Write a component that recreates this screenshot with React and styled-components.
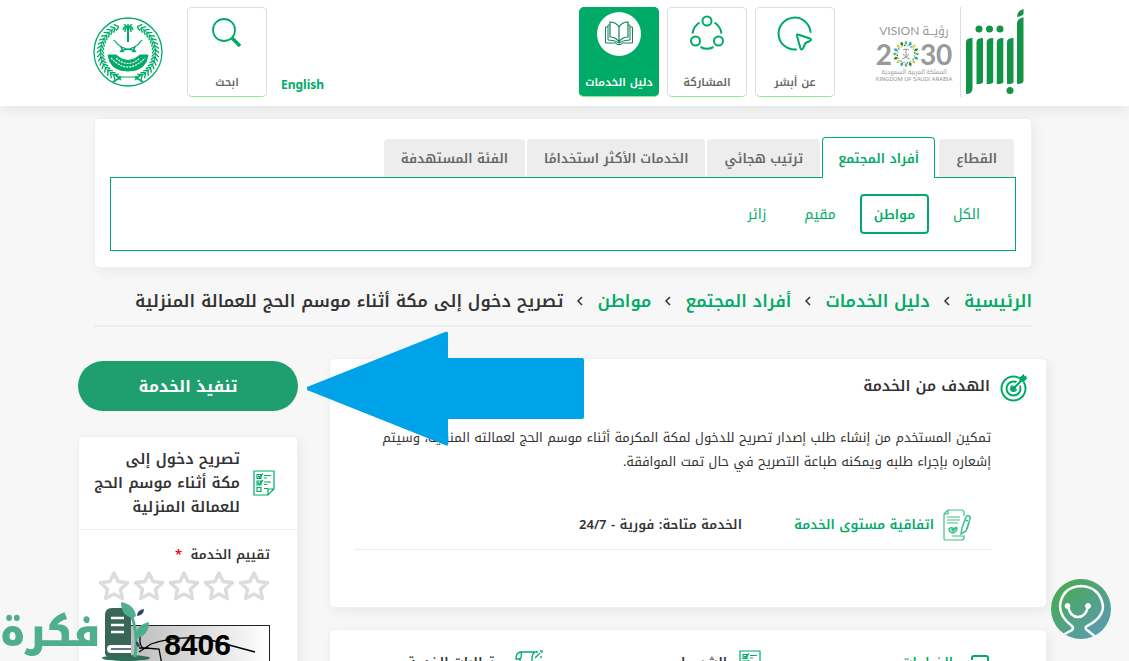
import React from "react";
import styled, { createGlobalStyle, css } from "styled-components";

const GREEN = "#00ab67";
const LINE = "#ececec";

const GlobalStyle = createGlobalStyle`
    * {
        box-sizing: border-box;
    }

    body {
        margin: 0;
        background: #f7f7f7;
        color: #333;
        font-family: "Noto Kufi Arabic", "DejaVu Sans", sans-serif;
        font-size: 13px;
        line-height: 24px;
    }

    button {
        font-family: inherit;
        cursor: pointer;
    }

    a {
        color: inherit;
        text-decoration: none;
    }

    h1, h2, h3, p {
        margin: 0;
    }

    svg {
        display: block;
        flex-shrink: 0;
    }
`;

const Page = styled.div`
    height: 100vh;
    overflow-x: hidden;
    overflow-y: auto;
    scrollbar-width: none;
`;

/* header */

const Header = styled.header`
    display: flex;
    align-items: center;
    height: 106px;
    padding: 0 104px 2px 93px;
    background: white;
    box-shadow: 0 4px 14px rgba(0, 0, 0, 0.08);
`;

const Divider = styled.div`
    width: 1px;
    height: 90px;
    margin: 0 4px 0 6px;
    background: #ddd;
`;

const Vision = styled.div`
    display: flex;
    flex-direction: column;
    align-items: center;
    width: 80px;
    margin-left: 39px;
    color: #97999b;
    direction: ltr;
    white-space: nowrap;
`;

const VisionTop = styled.div`
    display: flex;
    gap: 3px;
    font-family: Lato, "Noto Kufi Arabic", sans-serif;
    font-size: 12px;
    line-height: 18px;
`;

const VisionYear = styled.div`
    display: flex;
    align-items: center;
    font-family: Lato, sans-serif;
    font-size: 28px;
    font-weight: 700;
    line-height: 24px;
`;

const VisionSmall = styled.div`
    font-family: Roboto, "Noto Kufi Arabic", sans-serif;
    font-size: 6px;
    line-height: 7px;
`;

const HeaderNav = styled.nav`
    display: flex;
    gap: 8px;
    margin-left: auto;
`;

const HeaderButton = styled.button`
    display: flex;
    flex-direction: column;
    align-items: center;
    justify-content: space-between;
    width: 80px;
    height: 90px;
    padding: 4px 0 2px;
    background: ${(p) => (p.$active ? GREEN : "white")};
    color: ${(p) => (p.$active ? "white" : "#666")};
    border: 1px solid ${(p) => (p.$active ? GREEN : "#ddd")};
    border-bottom-color: #90ee90;
    border-radius: 5px;
    font-size: 11px;
    font-weight: 600;
    line-height: 22px;
    white-space: nowrap;
`;

const Language = styled.a`
    align-self: flex-end;
    margin: 0 0 7px 14px;
    color: ${GREEN};
    font-family: "Noto Sans", sans-serif;
    font-size: 12px;
    font-weight: 700;
`;

const EmblemLink = styled.a`
    margin-right: 24px;
`;

/* body */

const Body = styled.main`
    padding: 12px 82px 0 78px;
`;

const Inset = styled.div`
    margin: 0 15px 0 16px;
`;

const Card = styled.section`
    background: white;
    border: 1px solid #f0f0f0;
    border-radius: 5px;
    box-shadow: 3px 4px 12px rgba(0, 0, 0, 0.06);
`;

const FilterCard = styled(Card)`
    padding: 18px 15px 16px;
`;

const Tabs = styled.div`
    display: flex;
    align-items: flex-end;
    gap: 2px;
    padding-right: 2px;
`;

const Tab = styled.button`
    height: 38px;
    padding: 0 17px;
    background: #ededed;
    border: none;
    border-radius: 4px 4px 0 0;
    color: #666;
    font-size: 13px;
    font-weight: 600;
    white-space: nowrap;

    ${(p) =>
        p.$active &&
        css`
            height: 41px;
            padding: 0 15px;
            margin: 0 2px -1px 0;
            background: white;
            border: 1px solid ${GREEN};
            border-bottom: none;
            color: ${GREEN};
            z-index: 1;
        `}
`;

const TabPanel = styled.div`
    display: flex;
    gap: 10px;
    padding: 16px 21px;
    border: 1px solid ${GREEN};
`;

const Chip = styled.button`
    height: 40px;
    padding: 0 12px;
    background: white;
    border: 2px solid ${(p) => (p.$active ? GREEN : "transparent")};
    border-radius: 4px;
    color: ${GREEN};
    font-size: ${(p) => (p.$active ? 13 : 14)}px;
    font-weight: ${(p) => (p.$active ? 600 : 400)};
`;

const Crumbs = styled.nav`
    display: flex;
    align-items: center;
    gap: 12px;
    height: 59px;
    padding-top: 8px;
    border-bottom: 2px solid #ededed;
    font-size: 17px;
    font-weight: 600;
    white-space: nowrap;

    a {
        color: ${GREEN};
    }
`;

const Columns = styled.div`
    display: flex;
    align-items: flex-start;
    gap: 31px;
    margin-top: 31px;
`;

const Content = styled.div`
    flex: 1;
    min-width: 0;
    display: grid;
    gap: 21px;
`;

const GoalCard = styled(Card)`
    padding: 15px 18px 57px 24px;
`;

const GoalHead = styled.div`
    display: flex;
    gap: 10px;
    margin-bottom: 24px;

    h2 {
        font-size: 15px;
        font-weight: 600;
    }
`;

const GoalBody = styled.div`
    margin-right: 37px;

    p {
        font-size: 13px;
        line-height: 24px;
    }
`;

const Terms = styled.div`
    display: flex;
    align-items: center;
    gap: 9px;
    margin-top: 32px;
    padding: 3px 20px 8px;
    border-bottom: 1px solid ${LINE};
    font-size: 13px;
    font-weight: 600;

    a {
        margin-left: 43px;
        color: ${GREEN};
    }
`;

const StepsCard = styled(Card)`
    display: grid;
    grid-template-columns: 228px 218px 1fr;
    padding: 20px 57px 24px 24px;
`;

const Step = styled.a`
    display: flex;
    align-items: center;
    gap: 12px;
    color: ${(p) => (p.$active ? GREEN : "#333")};
    font-size: 13px;
    font-weight: 600;
`;

const Side = styled.aside`
    width: 220px;
    padding-top: 3px;
`;

const RunButton = styled.button`
    width: 100%;
    height: 50px;
    margin-bottom: 25px;
    background: #1f9f6f;
    border: none;
    border-radius: 25px;
    color: white;
    font-size: 16px;
    font-weight: 700;
`;

const SideHead = styled.div`
    display: flex;
    align-items: center;
    gap: 13px;
    padding: 10px 22px;
    border-bottom: 1px solid ${LINE};

    h3 {
        flex: 1;
        margin-left: -12px;
        font-size: 15px;
        font-weight: 600;
    }
`;

const Rating = styled.fieldset`
    margin: 0;
    padding: 13px 27px 24px 18px;
    border: none;
`;

const RatingTitle = styled.div`
    font-size: 13px;
    font-weight: 600;

    span {
        margin-right: 4px;
        color: red;
    }
`;

const Stars = styled.div`
    display: flex;
    gap: 3px;
    margin: 3px 0 23px;
`;

const Star = styled.label`
    display: grid;
    cursor: pointer;

    > * {
        grid-area: 1 / 1;
    }

    input {
        width: 32px;
        height: 32px;
        margin: 0;
        opacity: 0;
    }
`;

const Captcha = styled.div`
    display: grid;
    justify-items: center;
    align-items: center;
    width: 145px;
    height: 50px;
    border: 1px solid #222;
    background: linear-gradient(90deg, #bbb, #e2e2e2 60%, #fff);
    color: black;

    > * {
        grid-area: 1 / 1;
    }

    span {
        padding-bottom: 10px;
        font-family: "Liberation Sans", sans-serif;
        font-size: 30px;
        font-weight: 700;
    }
`;

/* things that float over the page */

const Pointer = styled.svg`
    position: absolute;
    top: 331px;
    left: 306px;
`;

const Assistant = styled.button`
    position: fixed;
    right: 18px;
    bottom: 22px;
    padding: 0;
    background: none;
    border: none;
`;

const Watermark = styled.div`
    position: fixed;
    left: 0;
    bottom: 0;
    display: flex;
    align-items: flex-end;
    height: 60px;
    direction: ltr;
    color: #4fae8f;

    span {
        font-size: 39px;
        font-weight: 900;
        line-height: 56px;
    }
`;

/* drawings */

const AbsherLogo = () => (
    <svg width="60" height="88" viewBox="0 0 60 88" fill="#129447">
        <path d="M1 34q0-4 6.500-4v50q0 6-6.500 6z" />
        <path d="M11.500 34q0-4 6.500-4v44q0 2-6.500 2z" />
        <path d="M21.700 34q0-4 6.500-4v44q0 2-6.500 2z" />
        <path d="M31.800 34q0-4 6.500-4v44q0 2-6.500 2z" />
        <path d="M42 34q0-4 6.500-4v44q0 2-6.500 2z" />
        <path d="M52 15q0-4 6.500-6v64q0 3-6.500 3z" />
        <path d="M52 9q0-6 6.500-8v5q-1 2-6.500 3z" />
        <circle cx="14" cy="21" r="3.500" />
        <circle cx="24.500" cy="21" r="3.500" />
        <circle cx="35" cy="21" r="3.500" />
        <circle cx="45" cy="82.500" r="3.500" />
    </svg>
);

const petals = Array.from({ length: 16 }, (_, i) => i * 22.5);
const petalColors = ["#7ab648", "#2c9dc9", "#c9cf3b", "#1a7f5a"];

const VisionFlower = () => (
    <svg width="28" height="28" viewBox="-14 -14 28 28">
        {petals.map((angle, i) => (
            <g key={angle} transform={`rotate(${angle})`} fill={petalColors[i % 4]}>
                <path d="M0-13.500l1.500 2.500L0-8.500-1.500-11z" />
                <circle cx="2" cy="-8.500" r=".8" />
            </g>
        ))}
        <g stroke="#97999b" fill="none">
            <path d="M0-5v8M-3-4q3-2 3 0 0-2 3 0" />
            <path d="M-4 5q5-1 7-5M4 5q-5-1-7-5" />
        </g>
    </svg>
);

const leaves = Array.from({ length: 17 }, (_, i) => 22 + i * 8);

const Emblem = () => (
    <svg width="70" height="70" viewBox="-35 -35 70 70" fill="none" stroke={GREEN}>
        <circle r="34" strokeWidth="1.300" />
        {[1, -1].map((side) => (
            <g key={side} transform={`scale(${side} 1)`}>
                {leaves.map((angle) => (
                    <g key={angle} transform={`rotate(${angle})`} strokeWidth="1.400">
                        <path d="M-1-27l4-4M-1-27l4 3" />
                    </g>
                ))}
                <path d="M13-24A27 27 0 0 1 16 22L7 25H0" strokeWidth="1" />
                <path d="M7 25l8 5M7 28l6-5" strokeWidth="1.600" />
                <path d="M14-12q-7 10-20 10" strokeWidth="1.300" />
                <path d="M-7-5l2 5M-4-1q-2 1-4 0" strokeWidth="1.600" />
            </g>
        ))}
        <path d="M0-24v14" strokeWidth="2" />
        <path
            d="M0-24q-3-4-5 2M0-24q3-4 5 2M0-24q-3-1-3 4M0-24q3-1 3 4M0-24v-4M0-24q-3-4-4-3M0-24q3-4 4-3"
            strokeWidth="1.500"
        />
        <path d="M-20 3h8Q0 14 12 3h8q-2 16-20 16T-20 3z" fill={GREEN} />
        <path d="M-17 6Q0 24 17 6M-12 6Q0 17 12 6" stroke="white" strokeWidth="1.200" strokeDasharray="2 1" />
    </svg>
);

const CursorIcon = () => (
    <svg width="44" height="44" viewBox="0 0 44 44" fill="none" stroke={GREEN} strokeWidth="2">
        <path d="M37.500 20A16 16 0 1 0 23 37.500" strokeLinecap="round" />
        <path
            d="M25 22.500l12 4q2 1 0 2.500l-4.500 2-2.500 5.500q-1.500 2-2.500 0L24 24q-.5-2 1-1.500z"
            strokeLinejoin="round"
        />
    </svg>
);

const ShareIcon = () => (
    <svg width="44" height="44" viewBox="0 0 44 44" fill="none" stroke={GREEN} strokeWidth="2">
        <circle cx="22" cy="9" r="4.500" />
        <circle cx="10.500" cy="29" r="4.500" />
        <circle cx="33.500" cy="29" r="4.500" />
        <path d="M7.500 21.500q1-7 7-11M36.500 21.500q-1-7-7-11M15.500 35q6.500 3.500 13 0" />
    </svg>
);

const BookIcon = () => (
    <svg width="44" height="44" viewBox="0 0 44 44" fill="none" stroke="#14805a">
        <circle cx="22" cy="22" r="22" fill="white" stroke="none" />
        <path d="M22 15v15q-3-5-9-5V10q6 0 9 5zM22 15q3-5 9-5v15q-6 0-9 5" strokeWidth="1.200" />
        <path d="M13 13h-2v15q7 0 11 3 4-3 11-3V13h-2M11 15H8.500v16H19l1 1.500h4l1-1.500h10.500V15H33" />
    </svg>
);

const SearchIcon = () => (
    <svg width="44" height="44" viewBox="0 0 44 44" fill="none" stroke={GREEN}>
        <circle cx="19" cy="18" r="11" strokeWidth="1.800" />
        <path d="M27 26l8 8" strokeWidth="3.500" />
    </svg>
);

const TargetIcon = () => (
    <svg width="28" height="28" viewBox="0 0 28 28" fill="none" stroke={GREEN} strokeWidth="2">
        <circle cx="13.500" cy="14.500" r="12" />
        <circle cx="13.500" cy="14.500" r="7" />
        <circle cx="13.500" cy="14.500" r="2.500" fill={GREEN} />
        <path d="M13.500 14.500L22 6" stroke="white" strokeWidth="5" />
        <circle cx="13.500" cy="14.500" r="1.500" fill={GREEN} />
        <path d="M13.500 14.500L26 2" />
        <path d="M20 7V4l3.500-3.500V4H27l-3.500 3.500z" fill={GREEN} strokeWidth="1" />
    </svg>
);

const AgreementIcon = () => (
    <svg width="28" height="32" viewBox="0 0 28 32" fill="none" stroke="#3fbf8d" strokeWidth="1.200">
        <path d="M1 5l4-4h13q3 0 3 3v3M1 5v25q0 1 2 1h15q3 0 3-2v-2H9M1 5h4V1" />
        <path d="M4 8h13M4 11h13M4 14h11" />
        <path d="M6 20q3-3 4 0 4-3 4 0-1 3-4 4-4-1-4-4zM8 20l2 2 4-4" strokeWidth="1.500" />
        <path d="M18 25l1-6 4-11q1-2 3-1t1 3l-4 12zM22 11l3 1M26 14l-2 6" strokeWidth="1.500" />
    </svg>
);

const ListIcon = ({ size = 22 }) => (
    <svg width={size} height={size + 4} viewBox="0 0 22 26" fill="none" stroke={GREEN} strokeWidth="1.200">
        <path d="M1 1h20v18l-6 6H1zM15 25v-6h6" />
        <path d="M4 4.500h4v4H4zM4 11h4v4H4zM4 17.500h4v4H4z" />
        <path d="M5 6l1.500 1.500L10 3.500M5 12.500L6.500 14 10 10M11 5.500h7M11 8h3M11 12h7M11 14.500h3M11 18.500h4" />
    </svg>
);

const StepsIcon = () => (
    <svg width="24" height="26" viewBox="0 0 24 26" fill="none" stroke={GREEN} strokeWidth="2">
        <path d="M7 10V8q0-2 2-2h12q2 0 2 2v13q0 2-2 2h-3" />
        <path d="M1 12h12q2 0 2 2v11H1z" />
    </svg>
);

const ScrollIcon = () => (
    <svg width="28" height="26" viewBox="0 0 28 26" fill="none" stroke={GREEN} strokeWidth="1.300">
        <path d="M1 9q0-7 5-7h14q-3 2-3 6v16H5V9zM5 9q2-2 1-7" />
        <path d="M20 8l5-5M21 2h2M26 6v2M25 1h2v2" />
    </svg>
);

const StarIcon = () => (
    <svg width="32" height="32" viewBox="0 0 32 32" fill="none" stroke="#dcdcdc" strokeWidth="3.500" strokeLinejoin="round">
        <path d="M16 3l4 8.500 9.500 1.200-7 6.500 1.800 9.300L16 24l-8.300 4.500 1.800-9.300-7-6.500L12 11.500z" />
    </svg>
);

const FaceIcon = () => (
    <svg width="60" height="60" viewBox="0 0 60 60" fill="none" stroke="white" strokeWidth="2.500">
        <defs>
            <linearGradient id="face" x1="0.2" y1="0.2" x2="0.9" y2="0.9">
                <stop offset="0" stopColor="#4aa95c" />
                <stop offset="1" stopColor="#5c9ab4" />
            </linearGradient>
            <clipPath id="faceClip">
                <circle cx="30" cy="30" r="30" />
            </clipPath>
        </defs>
        <circle cx="30" cy="30" r="30" fill="url(#face)" stroke="none" />
        <path
            d="M12 56l9-5q2-2 0-4Q9 38 9 27 11 8 30 7q19 1 22 20 0 12-16 20-3 2 0 4l10 8"
            clipPath="url(#faceClip)"
        />
        <path d="M17 27q2 11 10 11t10-11" />
        <circle cx="16.500" cy="27" r="2.500" fill="white" strokeWidth="1" />
        <circle cx="37" cy="27" r="2.500" fill="white" strokeWidth="1" />
    </svg>
);

const PlantBook = () => (
    <svg width="50" height="60" viewBox="0 0 50 60">
        <ellipse cx="25" cy="57" rx="24" ry="3" fill="#2f6f5c" />
        <path d="M4 14q0-7 7-7h14q5 0 5 5v44H8q-4 0-4-5z" fill="#3a6656" />
        <path d="M30 44H10q-4 0-4 4t4 4h20z" fill="white" />
        <path d="M10 17h13M10 24h13M10 31h13" stroke="white" strokeWidth="2.500" />
        <path d="M10 48h20" stroke="#334466" strokeWidth="1.500" />
        <path d="M34 56Q38 30 28 8" fill="none" stroke="#4fae8f" strokeWidth="3" />
        <path d="M32 17Q20 15 20 1q13 2 15 14zM34 38q0-14 14-17 0 14-14 17z" fill="#4fae8f" />
        <path d="M36 15q0-6 7-7 0 6-7 7zM35 40q4 2 4 7-5-2-4-7z" fill="#2f4468" />
    </svg>
);

const Squiggle = () => (
    <svg width="143" height="48" viewBox="0 0 143 48" fill="none" stroke="black" strokeWidth="1.300">
        <path d="M13 26l12-8q24-8 52-6l52 14M15 6q-3 12 2 16M19 22l14 1 3 16M13 22h10" />
    </svg>
);

const Chevron = () => (
    <svg width="10" height="12" viewBox="0 0 10 12" fill="none" stroke="#333" strokeWidth="1.500">
        <path d="M7 2L3 6l4 4" />
    </svg>
);

/* data */

const headerItems = [
    { label: "عن أبشر", icon: CursorIcon },
    { label: "المشاركة", icon: ShareIcon },
    { label: "دليل الخدمات", icon: BookIcon, active: true },
];

const tabs = ["القطاع", "أفراد المجتمع", "ترتيب هجائي", "الخدمات الأكثر استخدامًا", "الفئة المستهدفة"];
const groups = ["الكل", "مواطن", "مقيم", "زائر"];
const crumbs = ["الرئيسية", "دليل الخدمات", "أفراد المجتمع", "مواطن"];

export default function App() {
    return (
        <Page dir="rtl" lang="ar">
            <GlobalStyle />
            <Header>
                <AbsherLogo />
                <Divider />
                <Vision>
                    <VisionTop>
                        <span>VISION</span>
                        <span>رؤيــة</span>
                    </VisionTop>
                    <VisionYear>
                        2<VisionFlower />
                        30
                    </VisionYear>
                    <VisionSmall>المملكة العربية السعودية</VisionSmall>
                    <VisionSmall>KINGDOM OF SAUDI ARABIA</VisionSmall>
                </Vision>
                <HeaderNav>
                    {headerItems.map(({ label, icon: Icon, active }) => (
                        <HeaderButton key={label} $active={active}>
                            <Icon />
                            {label}
                        </HeaderButton>
                    ))}
                </HeaderNav>
                <Language href="#en">English</Language>
                <HeaderButton>
                    <SearchIcon />
                    ابحث
                </HeaderButton>
                <EmblemLink href="#moi" aria-label="وزارة الداخلية">
                    <Emblem />
                </EmblemLink>
            </Header>

            <Body>
                <Inset>
                    <FilterCard>
                        <Tabs>
                            {tabs.map((label, i) => (
                                <Tab key={label} $active={i === 1}>
                                    {label}
                                </Tab>
                            ))}
                        </Tabs>
                        <TabPanel>
                            {groups.map((label, i) => (
                                <Chip key={label} $active={i === 1}>
                                    {label}
                                </Chip>
                            ))}
                        </TabPanel>
                    </FilterCard>
                    <Crumbs>
                        {crumbs.map((label) => (
                            <React.Fragment key={label}>
                                <a href="#crumb">{label}</a>
                                <Chevron />
                            </React.Fragment>
                        ))}
                        <span>تصريح دخول إلى مكة أثناء موسم الحج للعمالة المنزلية</span>
                    </Crumbs>
                </Inset>

                <Columns>
                    <Content>
                        <GoalCard>
                            <GoalHead>
                                <TargetIcon />
                                <h2>الهدف من الخدمة</h2>
                            </GoalHead>
                            <GoalBody>
                                <p>
                                    تمكين المستخدم من إنشاء طلب إصدار تصريح للدخول لمكة المكرمة أثناء موسم الحج
                                    لعمالته المنزلية، وسيتم إشعاره بإجراء طلبه ويمكنه طباعة التصريح في حال تمت
                                    الموافقة.
                                </p>
                                <Terms>
                                    <AgreementIcon />
                                    <a href="#sla">اتفاقية مستوى الخدمة</a>
                                    <span>الخدمة متاحة: فورية - 24/7</span>
                                </Terms>
                            </GoalBody>
                        </GoalCard>
                        <StepsCard>
                            <Step href="#steps" $active>
                                <StepsIcon />
                                الخطوات
                            </Step>
                            <Step href="#terms">
                                <ListIcon />
                                الشروط
                            </Step>
                            <Step href="#requirements">
                                <ScrollIcon />
                                متطلبات الخدمة
                            </Step>
                        </StepsCard>
                    </Content>

                    <Side>
                        <RunButton>تنفيذ الخدمة</RunButton>
                        <Card>
                            <SideHead>
                                <ListIcon />
                                <h3>
                                    تصريح دخول إلى
                                    <br />
                                    مكة أثناء موسم الحج للعمالة المنزلية
                                </h3>
                            </SideHead>
                            <Rating>
                                <RatingTitle>
                                    تقييم الخدمة <span>*</span>
                                </RatingTitle>
                                <Stars>
                                    {[1, 2, 3, 4, 5].map((n) => (
                                        <Star key={n}>
                                            <StarIcon />
                                            <input type="radio" name="rating" value={n} aria-label={`${n}`} />
                                        </Star>
                                    ))}
                                </Stars>
                                <Captcha>
                                    <span>8406</span>
                                    <Squiggle />
                                </Captcha>
                            </Rating>
                        </Card>
                    </Side>
                </Columns>
            </Body>

            <Pointer width="279" height="115" viewBox="0 0 279 115" fill="#00a2e8">
                <path d="M1 56L139 1q3-1 3 1v25h134q2 0 2 2v57q0 2-2 2H142v25q0 3-3 1L1 59z" />
            </Pointer>
            <Watermark>
                <span>فكرة</span>
                <PlantBook />
            </Watermark>
            <Assistant aria-label="المساعد">
                <FaceIcon />
            </Assistant>
        </Page>
    );
}
